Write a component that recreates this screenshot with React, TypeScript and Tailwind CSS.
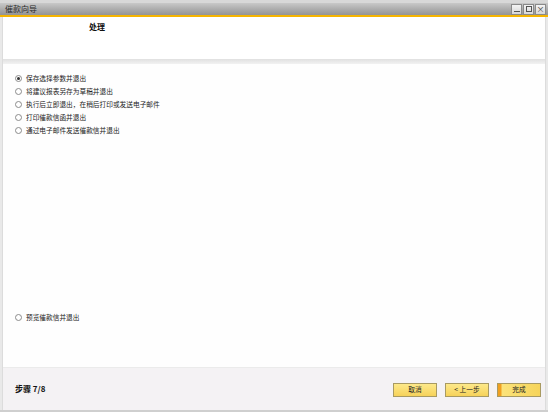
import React from "react";

const font = { fontFamily: '"Noto Sans CJK SC", "Liberation Sans", sans-serif' };

function Radio({ checked, label }: { checked?: boolean; label: string }) {
  return (
    <div className="flex items-center h-[13px]">
      <span className="w-[7px] h-[7px] rounded-full border border-[#8c8c8c] bg-white flex items-center justify-center">
        {checked && <span className="w-[3px] h-[3px] rounded-full bg-[#333]" />}
      </span>
      <span className="ml-[4px] text-[6.7px] text-[#222] leading-none">{label}</span>
    </div>
  );
}

function Btn({ label, active }: { label: string; active?: boolean }) {
  return (
    <div
      className={`w-[44px] h-[14px] border border-[#a89a62] flex items-center justify-center text-[6.7px] text-[#222] leading-none ${
        active
          ? "bg-[linear-gradient(90deg,#f0a020_0px,#f0a020_3px,#fbe37a_4px,#f6d45a_100%)]"
          : "bg-[linear-gradient(180deg,#fde98a,#f6d25a)]"
      }`}
    >
      {label}
    </div>
  );
}

export default function App() {
  return (
    <div className="w-[548px] h-[412px] bg-[#e9e9e9] flex flex-col overflow-hidden" style={font}>
      <div className="h-[3px] bg-[#d8d8d8]" />
      <div className="h-[12px] bg-[linear-gradient(180deg,#c8c8c8,#939393)] flex items-center px-[5px] justify-between">
        <span className="text-[8px] text-[#2a2a2a] leading-none">催款向导</span>
        <div className="flex gap-[1px] mr-[-3px]">
          {[0, 1, 2].map((i) => (
            <div key={i} className="w-[11px] h-[11px] bg-[linear-gradient(180deg,#f4f4f4,#d6d6d6)] border border-[#8a8a8a] flex items-center justify-center">
              {i === 0 && <div className="w-[6px] h-[1px] bg-[#555] mt-[5px]" />}
              {i === 1 && <div className="w-[6px] h-[6px] border border-[#555]" />}
              {i === 2 && <span className="text-[8px] leading-none text-[#444]">×</span>}
            </div>
          ))}
        </div>
      </div>
      <div className="h-[2px] bg-[#f5b400]" />
      <div className="flex-1 flex flex-col bg-white mx-[2px] border-l border-r border-[#dcdcdc]">
        <div className="h-[43px] border-b border-[#e2e2e2] pt-[6px] pl-[86px] leading-none">
          <span className="block text-[8px] font-bold text-[#111] leading-none">处理</span>
        </div>
        <div className="h-[4px] bg-[linear-gradient(180deg,#e4e4e4,#f2f2f2)]" />
        <div className="flex-1 flex flex-col pl-[12px] pt-[8px] bg-[#fefefe]">
          <Radio checked label="保存选择参数并退出" />
          <Radio label="将建议报表另存为草稿并退出" />
          <Radio label="执行后立即退出，在稍后打印或发送电子邮件" />
          <Radio label="打印催款信函并退出" />
          <Radio label="通过电子邮件发送催款信并退出" />
          <div className="flex-1" />
          <Radio label="预览催款信并退出" />
          <div className="h-[43px]" />
        </div>
        <div className="h-[43px] bg-[#f4f2f4] border-t border-[#ebebeb] flex items-center pl-[12px] pr-[4px]">
          <span className="text-[8px] font-bold text-[#111] leading-none">步骤 7/8</span>
          <div className="flex-1" />
          <div className="flex gap-[8px] mt-[1px]">
            <Btn label="取消" />
            <Btn label="< 上一步" />
            <Btn label="完成" active />
          </div>
        </div>
      </div>
      <div className="h-[2px] bg-[#cfcfcf]" />
    </div>
  );
}
